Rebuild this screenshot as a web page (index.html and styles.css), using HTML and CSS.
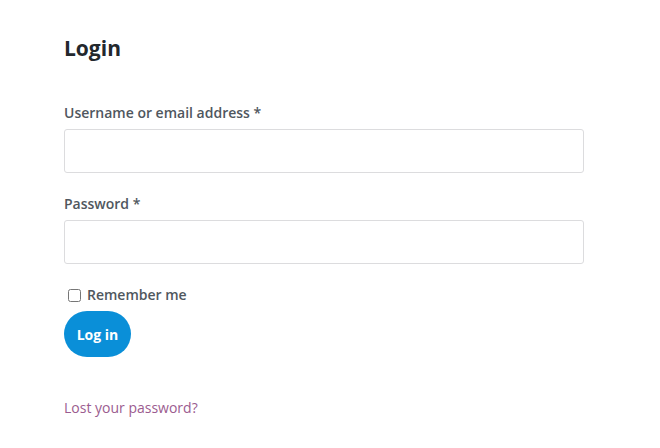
FILE: index.html
```html
<!DOCTYPE html>
<html>
<head>
<meta charset="utf-8">
<link rel="stylesheet" href="styles.css">
</head>
<body>
<main class="page">
  <h2 class="title">Login</h2>
  <form class="form">
    <div class="row">
      <label class="label">Username or email address&nbsp;<span class="req">*</span></label>
      <input class="input" type="text">
    </div>
    <div class="row">
      <label class="label">Password&nbsp;<span class="req">*</span></label>
      <input class="input" type="password">
    </div>
    <label class="remember"><input class="check" type="checkbox"><span>Remember me</span></label>
    <button class="btn" type="button">Log in</button>
    <a class="lost" href="#">Lost your password?</a>
  </form>
</main>
</body>
</html>
```
FILE: styles.css
```css
html, body { margin: 0; padding: 0; background: #fff; }
body { font-family: "Open Sans", "Noto Sans", sans-serif; color: #2c3338; }
.page { padding: 34px 76px 0 64px; width: 520px; }
.title { margin: 0; font-size: 21px; font-weight: 700; color: #23282d; line-height: 28px; }
.form { display: flex; flex-direction: column; margin-top: 41px; }
.row { display: flex; flex-direction: column; margin-bottom: 21px; }
.label { font-size: 14px; font-weight: 600; color: #50575e; line-height: 20px; margin-bottom: 6px; }
.req { color: #50575e; }
.input { box-sizing: border-box; width: 520px; height: 44px; border: 1px solid #dcdcde; border-radius: 3px; background: #fff; margin: 0; }
.remember { display: flex; align-items: center; font-size: 14px; font-weight: 600; color: #50575e; line-height: 20px; }
.check { width: 13px; height: 13px; margin: 0 6px 0 4px; }
.btn { align-self: flex-start; margin-top: 6px; height: 46px; width: 67px; padding: 0; border: none; border-radius: 23px; background: #0a8fd8; color: #fff; font-family: inherit; font-size: 14px; font-weight: 700; }
.lost { margin-top: 41px; font-size: 14px; color: #9b5c8f; text-decoration: none; line-height: 20px; align-self: flex-start; }
```
